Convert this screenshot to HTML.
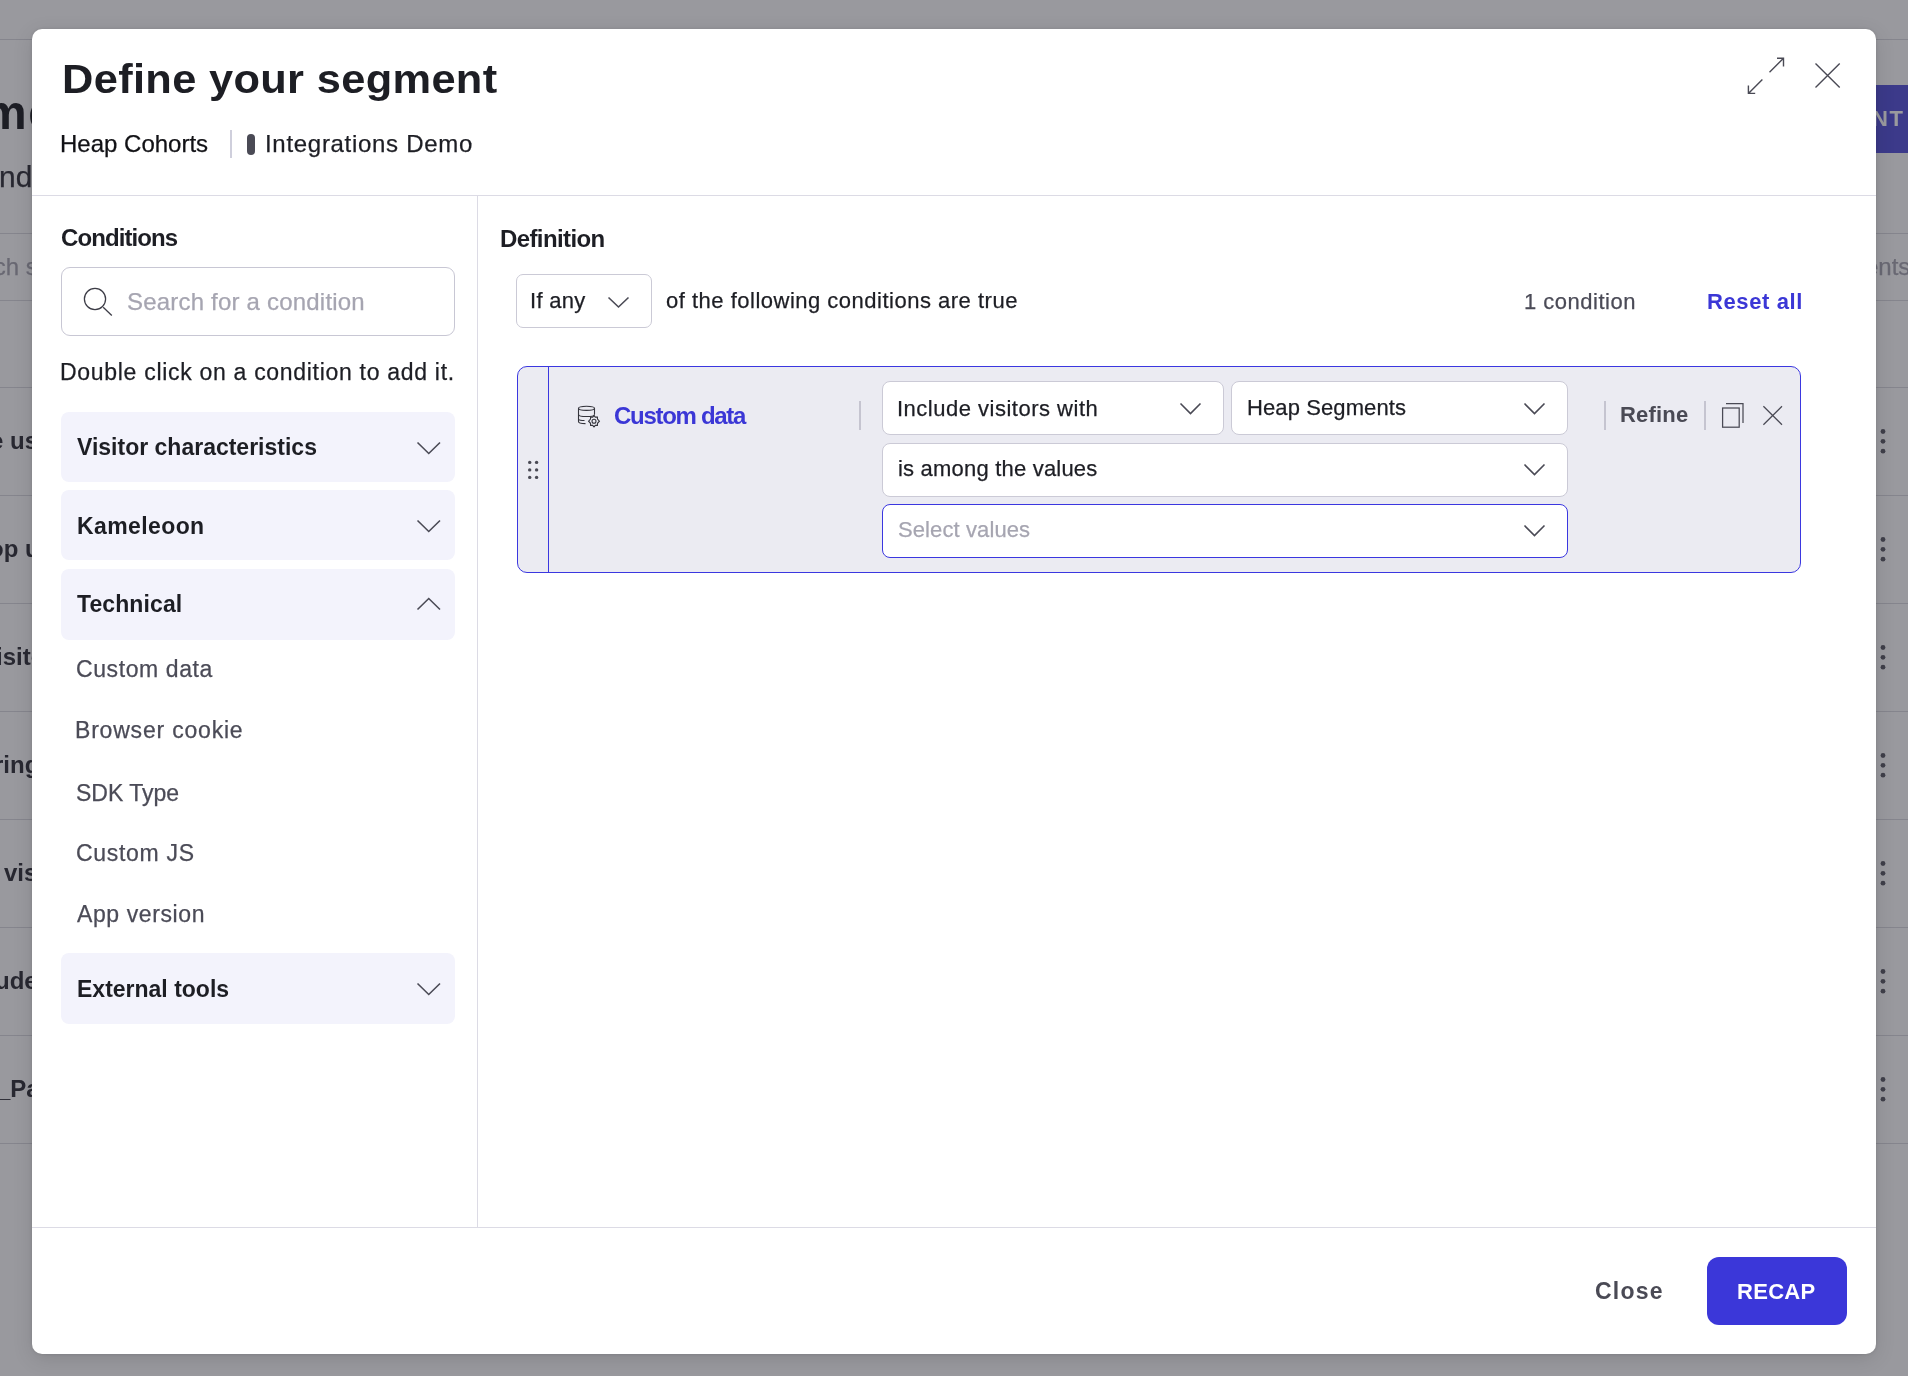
<!DOCTYPE html>
<html><head><meta charset="utf-8">
<style>
*{box-sizing:border-box;margin:0;padding:0}
html,body{width:1908px;height:1376px;overflow:hidden}
body{font-family:"Liberation Sans",sans-serif;background:#fff;position:relative}
.a{position:absolute}
.t{position:absolute;white-space:nowrap;line-height:1;will-change:transform;-webkit-text-stroke:0.25px currentColor}
#bg{position:absolute;left:0;top:0;width:1908px;height:1376px;background:#fdfdff;overflow:hidden}
#ov{position:absolute;left:0;top:0;width:1908px;height:1376px;background:rgba(32,30,40,0.45)}
#modal{position:absolute;left:32px;top:29px;width:1844px;height:1325px;background:#fff;border-radius:10px;box-shadow:0 0 3px rgba(0,0,0,0.12),0 5px 20px rgba(0,0,0,0.13)}
.hl{position:absolute;height:1px;background:#dcdbe5}
.bgl{position:absolute;height:1px;background:#d9d9e0;left:0;width:1908px}
.acc{position:absolute;left:61px;width:394px;height:70px;background:#f3f3fc;border-radius:8px}
.acct{will-change:transform;position:absolute;left:15.9px;font-size:23px;font-weight:bold;color:#1d1e24;white-space:nowrap;line-height:1}
.item{will-change:transform;-webkit-text-stroke:0.25px currentColor;position:absolute;left:76.3px;font-size:23px;letter-spacing:0.6px;color:#4b4b57;white-space:nowrap;line-height:1}
.sel{position:absolute;background:#fff;border:1.5px solid #cbcad6;border-radius:8px}
.selt{position:absolute;left:15px;font-size:24px;color:#1d1e24;white-space:nowrap;line-height:1}
svg{position:absolute;overflow:visible}
.t[style*="bold"]{-webkit-text-stroke:0}
</style></head><body>
<div id="bg">
  <div class="bgl" style="top:39px"></div>
  <div class="t" style="left:-16px;top:89.4px;font-size:48px;font-weight:bold;color:#1d1e24;letter-spacing:1.5px">me</div>
  <div class="t" style="left:-1px;top:161.6px;font-size:30px;color:#30303a">nd</div>
  <div class="bgl" style="top:233px"></div>
  <div class="t" style="left:-57.4px;top:254.6px;font-size:24px;color:#a6a5b1">Search segments</div>
  <div class="t" style="left:1865px;top:254.6px;font-size:24px;color:#a6a5b1">ents</div>
  <div class="bgl" style="top:300px"></div>
  <div class="a" style="left:1700px;top:85px;width:260px;height:68px;background:#5451da;border-radius:6px"></div>
  <div class="t" style="left:1872px;top:108.4px;font-size:22px;font-weight:bold;color:#fff;letter-spacing:1.5px">NT</div>
  <div class="bgl" style="top:387px"></div>
  <div class="bgl" style="top:495px"></div>
  <div class="bgl" style="top:603px"></div>
  <div class="bgl" style="top:711px"></div>
  <div class="bgl" style="top:819px"></div>
  <div class="bgl" style="top:927px"></div>
  <div class="bgl" style="top:1035px"></div>
  <div class="bgl" style="top:1143px"></div>
  <div class="t" style="left:-10.5px;top:429.1px;font-size:24px;font-weight:bold;color:#30303a">e us</div>
  <div class="t" style="left:-11.5px;top:537.1px;font-size:24px;font-weight:bold;color:#30303a">op u</div>
  <div class="t" style="left:-4.5px;top:645.1px;font-size:24px;font-weight:bold;color:#30303a">isito</div>
  <div class="t" style="left:-5.8px;top:753.1px;font-size:24px;font-weight:bold;color:#30303a">ring</div>
  <div class="t" style="left:-12px;top:861.1px;font-size:24px;font-weight:bold;color:#30303a">r vis</div>
  <div class="t" style="left:-4.7px;top:969.1px;font-size:24px;font-weight:bold;color:#30303a">ude</div>
  <div class="t" style="left:-2.8px;top:1077.1px;font-size:24px;font-weight:bold;color:#30303a">_Pa</div>
  <svg id="kebabs" style="left:0;top:0" width="1908" height="1376">
    <g fill="#5a5a66">
      <circle cx="1883" cy="431.5" r="2.4"/><circle cx="1883" cy="441.3" r="2.4"/><circle cx="1883" cy="451.2" r="2.4"/>
      <circle cx="1883" cy="539.5" r="2.4"/><circle cx="1883" cy="549.3" r="2.4"/><circle cx="1883" cy="559.2" r="2.4"/>
      <circle cx="1883" cy="647.5" r="2.4"/><circle cx="1883" cy="657.3" r="2.4"/><circle cx="1883" cy="667.2" r="2.4"/>
      <circle cx="1883" cy="755.5" r="2.4"/><circle cx="1883" cy="765.3" r="2.4"/><circle cx="1883" cy="775.2" r="2.4"/>
      <circle cx="1883" cy="863.5" r="2.4"/><circle cx="1883" cy="873.3" r="2.4"/><circle cx="1883" cy="883.2" r="2.4"/>
      <circle cx="1883" cy="971.5" r="2.4"/><circle cx="1883" cy="981.3" r="2.4"/><circle cx="1883" cy="991.2" r="2.4"/>
      <circle cx="1883" cy="1079.5" r="2.4"/><circle cx="1883" cy="1089.3" r="2.4"/><circle cx="1883" cy="1099.2" r="2.4"/>
    </g>
  </svg>
</div>
<div id="ov"></div>
<div id="modal"></div>

<!-- header -->
<div class="t" id="title" style="left:62.4px;top:58.9px;font-size:40px;font-weight:bold;color:#1d1e24;letter-spacing:0.3px;transform:scaleX(1.085);transform-origin:0 0">Define your segment</div>
<div class="t" style="left:59.6px;top:132.3px;font-size:24px;color:#111115">Heap Cohorts</div>
<div class="a" style="left:230px;top:130px;width:2px;height:28px;background:#cfcfdc"></div>
<div class="a" style="left:247px;top:134px;width:8px;height:21px;border-radius:4px;background:#4a4a55"></div>
<div class="t" style="left:264.5px;top:132.3px;font-size:24px;color:#1d1e24;letter-spacing:0.7px">Integrations Demo</div>
<svg style="left:0;top:0" width="1908" height="200">
  <g stroke="#4a4a55" stroke-width="1.4" fill="none" stroke-linecap="butt">
    <path d="M1769.5 72.2 L1783.5 58.3 M1777 58.3 H1783.5 V66.5"/>
    <path d="M1762.4 79.4 L1748.4 93.4 M1748.4 85.5 V93.4 H1755.2"/>
    <path d="M1815.5 63.4 L1839.7 87.6 M1839.7 63.4 L1815.5 87.6"/>
  </g>
</svg>
<div class="hl" style="left:32px;top:195px;width:1844px"></div>
<div class="a" style="left:477px;top:196px;width:1px;height:1031px;background:#dcdbe5"></div>
<div class="hl" style="left:32px;top:1227px;width:1844px"></div>

<!-- left panel -->
<div class="t" style="left:60.8px;top:225.7px;font-size:24px;font-weight:bold;color:#1d1e24;letter-spacing:-0.9px">Conditions</div>
<div class="a" style="left:61px;top:267px;width:394px;height:69px;border:1.5px solid #c8c7d4;border-radius:9px"></div>
<svg style="left:0;top:0" width="500" height="400">
  <g stroke="#3c3c46" stroke-width="1.25" fill="none">
    <circle cx="95" cy="299" r="10.6"/>
    <path d="M103.2 307.3 L111.8 315.5"/>
  </g>
</svg>
<div class="t" style="left:126.7px;top:289.6px;font-size:24px;color:#a6a5b1;letter-spacing:0.2px">Search for a condition</div>
<div class="t" style="left:60px;top:361.3px;font-size:23px;color:#1d1e24;letter-spacing:0.7px">Double click on a condition to add it.</div>

<div class="acc" style="top:412px"><div class="acct" style="top:23.7px">Visitor characteristics</div>
  <svg style="left:356px;top:30px" width="24" height="12"><path d="M0.5 0.5 L11.75 11.5 L23 0.5" stroke="#4a4a55" stroke-width="1.6" fill="none"/></svg></div>
<div class="acc" style="top:490px"><div class="acct" style="top:25px;left:15.6px;letter-spacing:0.4px">Kameleoon</div>
  <svg style="left:356px;top:30px" width="24" height="12"><path d="M0.5 0.5 L11.75 11.5 L23 0.5" stroke="#4a4a55" stroke-width="1.6" fill="none"/></svg></div>
<div class="acc" style="top:569px;height:70.5px"><div class="acct" style="top:23.8px;left:16.3px;letter-spacing:0.1px">Technical</div>
  <svg style="left:356px;top:29px" width="24" height="12"><path d="M0.5 11.5 L11.75 0.5 L23 11.5" stroke="#4a4a55" stroke-width="1.6" fill="none"/></svg></div>
<div class="item" style="top:658.3px">Custom data</div>
<div class="item" style="top:719px;left:75.3px;letter-spacing:0.8px">Browser cookie</div>
<div class="item" style="top:781.6px;letter-spacing:0">SDK Type</div>
<div class="item" style="top:841.9px;letter-spacing:0.7px">Custom JS</div>
<div class="item" style="top:902.8px;left:77.3px">App version</div>
<div class="acc" style="top:953px;height:70.6px"><div class="acct" style="top:24.8px">External tools</div>
  <svg style="left:356px;top:30px" width="24" height="12"><path d="M0.5 0.5 L11.75 11.5 L23 0.5" stroke="#4a4a55" stroke-width="1.6" fill="none"/></svg></div>

<!-- right panel -->
<div class="t" style="left:499.5px;top:226.7px;font-size:24px;font-weight:bold;color:#1d1e24;letter-spacing:-0.6px">Definition</div>
<div class="sel" style="left:516px;top:274px;width:136px;height:54px;border-radius:7px"></div>
<div class="t" style="left:530.4px;top:290.3px;font-size:22px;color:#1d1e24;letter-spacing:0.3px">If any</div>
<svg style="left:608px;top:297px" width="22" height="11"><path d="M0.5 0.5 L10.5 10 L20.5 0.5" stroke="#4a4a55" stroke-width="1.6" fill="none"/></svg>
<div class="t" style="left:665.6px;top:290.3px;font-size:22px;color:#1d1e24;letter-spacing:0.5px">of the following conditions are true</div>
<div class="t" style="left:1524.2px;top:291.3px;font-size:22px;color:#4b4b57;letter-spacing:0.5px">1 condition</div>
<div class="t" style="left:1707.4px;top:291.3px;font-size:22px;font-weight:bold;color:#3b37d6;letter-spacing:0.6px">Reset all</div>

<!-- condition card -->
<div class="a" style="left:517px;top:366px;width:1284px;height:207px;background:#ebebf2;border:1.5px solid #3b37e0;border-radius:10px"></div>
<div class="a" style="left:547.5px;top:367px;width:1.5px;height:205px;background:#3b37e0"></div>
<svg style="left:0;top:0" width="600" height="600">
  <g fill="#4a4a55">
    <circle cx="529.7" cy="462.4" r="1.7"/><circle cx="536.6" cy="462.4" r="1.7"/>
    <circle cx="529.7" cy="469.9" r="1.7"/><circle cx="536.6" cy="469.9" r="1.7"/>
    <circle cx="529.7" cy="477.4" r="1.7"/><circle cx="536.6" cy="477.4" r="1.7"/>
  </g>
</svg>
<svg style="left:0;top:0" width="700" height="500">
  <g stroke="#34343c" stroke-width="1.1" fill="none">
    <ellipse cx="586.5" cy="408.3" rx="8" ry="2.1"/>
    <path d="M578.5 408.3 V421.4 C578.5 422.9 581.5 423.6 585.5 423.6"/>
    <path d="M594.5 408.3 V414.6"/>
    <path d="M578.5 414.4 C578.5 415.7 582 416.5 586.5 416.5 C591 416.5 594.5 415.7 594.5 414.4"/>
    <path d="M578.5 419.2 C579 420 581.5 420.5 584.5 420.5"/>
    <circle cx="594" cy="421.2" r="2"/>
    <path d="M594 415.6 L595.3 417.1 L597.4 417 L597.5 419 L599.4 421.2 L597.5 423.3 L597.4 425.4 L595.3 425.3 L594 426.8 L592.7 425.3 L590.6 425.4 L590.5 423.3 L588.6 421.2 L590.5 419 L590.6 417 L592.7 417.1 Z"/>
  </g>
</svg>
<div class="t" style="left:613.7px;top:403.7px;font-size:24px;font-weight:bold;color:#3b37d6;letter-spacing:-1.3px">Custom data</div>
<div class="a" style="left:859px;top:401px;width:2px;height:29px;background:#c5c4d0"></div>

<div class="sel" style="left:882px;top:381px;width:342px;height:54px"></div>
<div class="t" style="left:896.8px;top:397.6px;font-size:22px;color:#1d1e24;letter-spacing:0.5px">Include visitors with</div>
<svg style="left:1180px;top:403px" width="22" height="12"><path d="M0.5 0.5 L10.5 10.5 L20.5 0.5" stroke="#4a4a55" stroke-width="1.6" fill="none"/></svg>
<div class="sel" style="left:1231px;top:381px;width:337px;height:54px"></div>
<div class="t" style="left:1246.8px;top:397.4px;font-size:22px;color:#1d1e24;letter-spacing:0.1px">Heap Segments</div>
<svg style="left:1524px;top:403px" width="22" height="12"><path d="M0.5 0.5 L10.5 10.5 L20.5 0.5" stroke="#4a4a55" stroke-width="1.6" fill="none"/></svg>
<div class="sel" style="left:882px;top:443px;width:686px;height:54px"></div>
<div class="t" style="left:897.8px;top:458.3px;font-size:22px;color:#1d1e24;letter-spacing:0.2px">is among the values</div>
<svg style="left:1524px;top:464px" width="22" height="12"><path d="M0.5 0.5 L10.5 10.5 L20.5 0.5" stroke="#4a4a55" stroke-width="1.6" fill="none"/></svg>
<div class="sel" style="left:882px;top:504px;width:686px;height:54px;border-color:#3b37e0"></div>
<div class="t" style="left:897.8px;top:519.3px;font-size:22px;color:#a6a5b1;letter-spacing:0.1px">Select values</div>
<svg style="left:1524px;top:525px" width="22" height="12"><path d="M0.5 0.5 L10.5 10.5 L20.5 0.5" stroke="#4a4a55" stroke-width="1.6" fill="none"/></svg>

<div class="a" style="left:1604px;top:401px;width:2px;height:29px;background:#c5c4d0"></div>
<div class="t" style="left:1620.1px;top:404.2px;font-size:22px;font-weight:bold;color:#4a4a55;letter-spacing:0.2px">Refine</div>
<div class="a" style="left:1704px;top:401px;width:2px;height:29px;background:#c5c4d0"></div>
<svg style="left:0;top:0" width="1900" height="500">
  <g stroke="#4a4a55" stroke-width="1.25" fill="none">
    <rect x="1722.6" y="408" width="16.6" height="19.2"/>
    <path d="M1726 403.6 H1743 V423.1"/>
    <path d="M1763.4 406.3 L1782 424.8 M1782 406.3 L1763.4 424.8"/>
  </g>
</svg>

<!-- footer -->
<div class="t" style="left:1595.3px;top:1280.3px;font-size:23px;font-weight:bold;color:#4a4a55;letter-spacing:1.2px">Close</div>
<div class="a" style="left:1707px;top:1257px;width:140px;height:68px;background:#3b37d9;border-radius:12px"></div>
<div class="t" style="left:1736.8px;top:1280.6px;font-size:22px;font-weight:bold;color:#fff;letter-spacing:0.3px">RECAP</div>
</body></html>
